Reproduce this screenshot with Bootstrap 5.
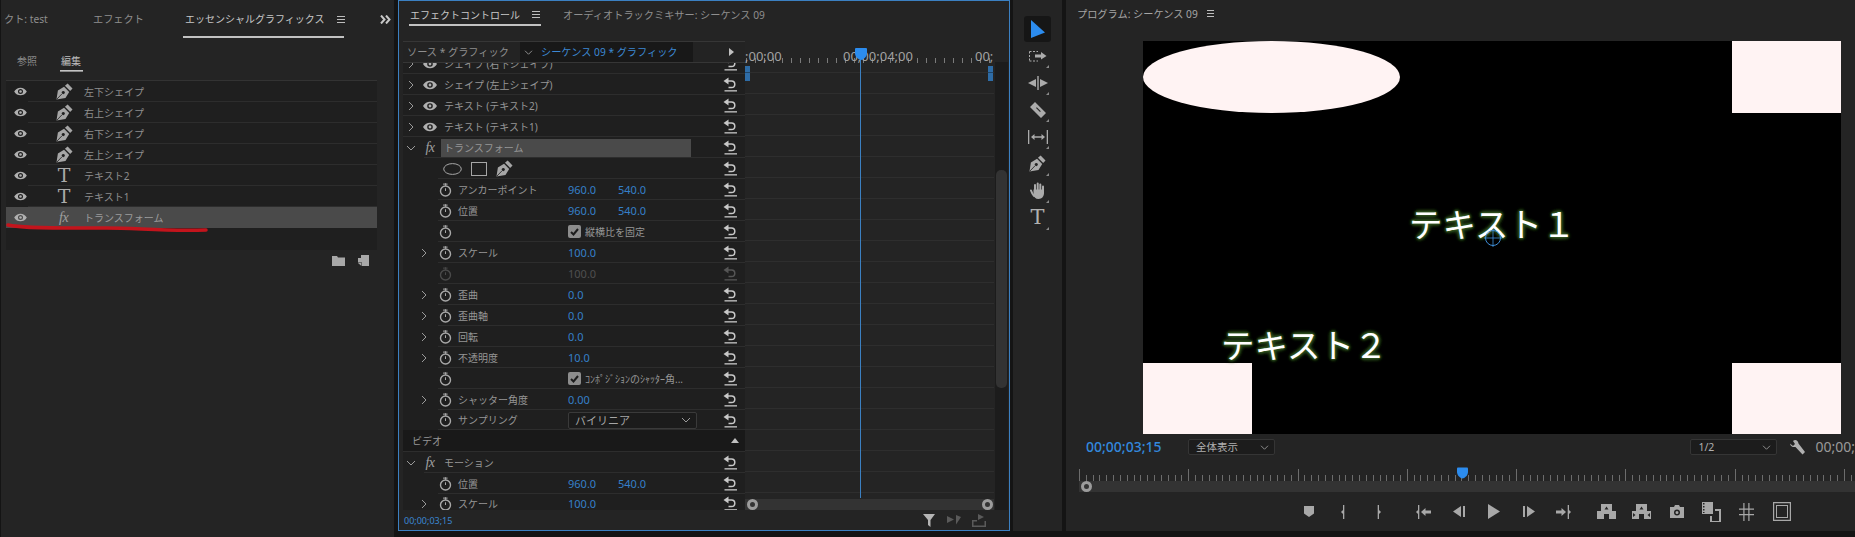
<!DOCTYPE html>
<html lang="ja">
<head>
<meta charset="utf-8">
<title>エフェクトコントロール</title>
<link href="https://cdn.jsdelivr.net/npm/bootstrap@5.3.0/dist/css/bootstrap.min.css" rel="stylesheet">
<style>
html,body{height:537px;overflow:hidden;}
body{margin:0;background:#141414;color:#9c9c9c;font-family:"Noto Sans","Noto Sans CJK JP",sans-serif;font-size:10px;line-height:1;}
.appshell{width:1855px;height:537px;}
.ic{display:block;fill:currentColor;flex:none;}
.sr{fill:none;stroke:currentColor;}
/* left */
.pane-left{width:393px;height:537px;margin-left:1px;background:#242424;flex:none;}
.tabstrip{height:41px;position:relative;}
.ptab{color:#8f8f8f;font-size:10.2px;white-space:nowrap;}
.ptab-on{color:#c8c8c8;font-size:10px;}
.tabbar{position:absolute;height:2px;background:#c2c2c2;}
.burger{width:8px;height:7px;border-top:1px solid #bdbdbd;border-bottom:1px solid #bdbdbd;position:relative;flex:none;}
.burger::after{content:"";position:absolute;left:0;right:0;top:2px;height:1px;background:#bdbdbd;}
.lefttabs{padding:14px 0 0 3px;}
.sub-tabs{height:39px;padding:15px 0 0 16px;position:relative;}
.sub-tab{font-size:10px;color:#8a8a8a;width:44px;}
.sub-tab-on{color:#bdbdbd;}
.layerlist{margin-left:5px;width:371px;height:170px;background:#1f1f1f;border-top:1px solid #333;position:relative;border-radius:0;}
.layer{height:21px;padding:0;border:0;border-radius:0!important;color:#8e8e8e;background:linear-gradient(#2d2d2d,#2d2d2d) 22px 100%/100% 1px no-repeat;font-size:10px;}
.layer-on{background:#4a4a4a;}
.lay-eye{width:28px;padding-left:8px;color:#b0b0b0;flex:none;}
.lay-icon{width:50px;padding-left:22px;color:#a6a6a6;flex:none;display:flex;justify-content:flex-start;}
.serif-t{font-family:"DejaVu Serif",serif;font-size:19px;line-height:21px;color:#aaa;display:block;width:18px;text-align:center;margin-left:-1px;}
.fx-mark{font-family:"Liberation Serif",serif;font-style:italic;font-size:14px;color:#a0a0a0;line-height:21px;letter-spacing:-.5px;}
.redline{position:absolute;left:0;top:140px;pointer-events:none;}
.leftfoot{width:376px;margin-top:5px;padding-right:8px;color:#a8a8a8;gap:13px;}
/* effect controls */
.pane-fx{width:612px;height:531px;margin-left:4px;background:#242424;border:1px solid #3b80c2;flex:none;}
.fxtabs{height:40px;position:relative;padding:8px 0 0 11px;}
.fxbody{height:470px;}
.fxleft{width:342px;margin-left:4px;flex:none;height:469px;overflow:hidden;background:#1f1f1f;}
.srcbar{height:22px;background:#232323;border-top:1px solid #363636;border-bottom:1px solid #363636;position:relative;z-index:2;flex:none;font-size:10.2px;}
.srcname{width:117px;padding-left:4px;color:#8e8e8e;white-space:nowrap;flex:none;}
.srcsel{width:173px;height:20px;background:#181818;color:#3c88d4;white-space:nowrap;padding-left:4px;flex:none;gap:8px;}
.srcarrow{width:0;height:0;border-left:5px solid #c0c0c0;border-top:4px solid transparent;border-bottom:4px solid transparent;margin-left:36px;}
.fxrows{margin-top:-10px;}
.erow{height:21px;flex:none;color:#969696;background:linear-gradient(#2d2d2d,#2d2d2d) 35px 100%/100% 1px no-repeat;white-space:nowrap;}
.erow-top{background:linear-gradient(#2d2d2d,#2d2d2d) 0 100%/100% 1px no-repeat;}
.erow-mid{background:linear-gradient(#2d2d2d,#2d2d2d) 21px 100%/100% 1px no-repeat;}
.erow-video{background:#191919;border-bottom:1px solid #2d2d2d;padding-left:9px;height:22px;}
.erow-last{height:19px;background:none;}
.tw{width:16px;flex:none;display:flex;justify-content:center;color:#9a9a9a;}
.t-eye{width:22px;flex:none;display:flex;justify-content:center;color:#b0b0b0;}
.t-fx{width:22px;flex:none;text-align:center;margin-right:3px;}
.t-fx .fx-mark{line-height:19px;}
.tname{padding-left:3px;}
.tw2{width:35px;padding-left:17px;flex:none;color:#9a9a9a;}
.swatch{width:14px;flex:none;display:flex;justify-content:center;color:#a9a9a9;}
.elabel{width:110px;margin-left:6px;flex:none;}
.eval{width:50px;flex:none;color:#357fc9;font-size:11px;}
.eval-off{color:#4f4f4f;}
.swatch-off{color:#4a4a4a;}
.reset{margin-left:auto;margin-right:7px;color:#c8c8c8;flex:none;}
.reset-off{color:#555;}
.xhl{height:18px;width:250px;margin-left:-3px;background:#4a4a4a;padding-left:3px;flex:none;display:flex;align-items:center;}
.shapes{padding-left:40px;gap:9px;color:#a6a6a6;}
.tick{width:13px;height:13px;background:#8d8d8d;border-radius:2px;color:#1d1d1d;flex:none;display:flex;align-items:center;justify-content:center;margin-right:4px;}
.checkcell{font-size:10px;}
.dropper{width:129px;height:17px;background:#1b1b1b;border:1px solid #3a3a3a;border-radius:2px;padding:0 5px 0 6px;color:#a6a6a6;font-size:11px;flex:none;}
.tline{width:249px;flex:none;position:relative;height:469px;}
.ruler{height:22px;position:relative;color:#a2a2a2;font-size:13px;padding-top:9px;background:repeating-linear-gradient(to right,#7a7a7a 0 1px,transparent 1px 9px) 1px 100%/100% 5px no-repeat;}
.rulab1{width:98px;display:inline-block;}
.rulab2{width:132px;display:inline-block;}
.tgrid{height:436px;background:linear-gradient(to bottom,transparent 20px,#2e2e2e 20px) 0 -11px/100% 21px;}
.tscroll{height:11px;background:#333;position:relative;}
.knob{position:absolute;width:11px;height:11px;border:3px solid #9c9c9c;border-radius:50%;background:#333;top:0;}
.phead-line{position:absolute;left:115px;top:16px;width:1px;height:441px;background:#3b80c2;}
.phead{position:absolute;left:110px;top:7px;color:#2c8cee;}
.kf{position:absolute;width:5px;height:15px;top:25px;background:linear-gradient(#2e6ca6 0 6px,#1f4468 6px 7px,#2e6ca6 7px);}
.vtrack{width:13px;margin-left:1px;flex:none;margin-top:21px;height:448px;background:#1c1c1c;padding:108px 1px 0 1px;}
.vthumb{height:218px;background:#333;border-radius:5px;}
.fxfoot{height:18px;padding-left:5px;color:#3b86d1;font-size:9px;position:relative;}
.foot-ic{position:absolute;top:3px;}
/* tools */
.pane-tools{width:49px;height:531px;margin-left:3px;background:#242424;flex:none;padding-top:16px;color:#ababab;}
.toolslot{height:27px;width:100%;display:flex;align-items:center;justify-content:center;position:relative;}
.toolslot:not(.tool-sel)::after{content:"";position:absolute;right:13px;bottom:1px;border-bottom:3px solid #8a8a8a;border-left:3px solid transparent;}
.tool-sel{height:26px;width:27px;margin-left:11px;background:#161616;border-radius:3px;color:#2c8cee;}
.tool-t{font-family:"DejaVu Serif",serif;font-size:21px;color:#b0b0b0;line-height:27px;}
/* program */
.pane-prog{width:789px;height:531px;margin-left:4px;background:#242424;flex:none;overflow:hidden;}
.progtabs{height:41px;padding:8px 0 0 11px;gap:9px;}
.viewer{width:698px;height:393px;margin-left:77px;background:#000;position:relative;overflow:hidden;flex:none;}
.vshape{position:absolute;background:#fff3f3;}
.vtext{position:absolute;color:#fff;font-size:33.5px;line-height:35px;white-space:nowrap;text-shadow:0 0 2px #30521f,0 0 2px #30521f,0 0 3px #30521f,0 0 3px #30521f,0 0 4px #2c4a1e,0 0 4px #2c4a1e,0 0 5px #2c4a1e,0 0 5px #2c4a1e;}
.ctrlrow{height:16px;margin-top:5px;padding-left:20px;flex:none;}
.tcode{width:102px;color:#3388dd;font-size:14px;font-weight:500;flex:none;}
.mselect{width:87px;height:16px;background:#1c1c1c;border:1px solid #353535;border-radius:2px;padding:0 5px 0 7px;color:#b0b0b0;font-size:10.5px;flex:none;}
.wrench{margin-left:13px;color:#b0b0b0;}
.tcode-r{margin-left:10px;color:#9a9a9a;font-size:14px;white-space:nowrap;}
.mruler{height:12px;margin:14px 0 0 13px;position:relative;flex:none;background:
 repeating-linear-gradient(to right,#6c6c6c 0 1px,transparent 1px 109.3px) 0 0/100% 100% no-repeat,
 repeating-linear-gradient(to right,#6c6c6c 0 1px,transparent 1px 6.83px) 0 100%/100% 6px no-repeat;}
.mhead{position:absolute;left:378px;top:-2px;color:#2c8cee;}
.mbar{height:11px;margin-left:13px;background:#333;position:relative;flex:none;}
.transport{padding-left:225px;height:39px;color:#a8a8a8;flex:none;}
.tbtn{width:35px;flex:none;display:flex;justify-content:center;}
.tgap1{margin-left:10px;}
.tgap2{margin-left:8px;}
</style>
</head>
<body>
<svg width="0" height="0" class="position-absolute">
 <defs>
  <symbol id="i-eye" viewBox="0 0 14 10"><path fill-rule="evenodd" d="M0 5C3-.7 11-.7 14 5 11 10.700 3 10.700 0 5ZM7 2.200A2.800 2.800 0 1 0 7 7.800 2.800 2.800 0 1 0 7 2.200Z"/><circle cx="7" cy="5" r="1.400"/></symbol>
  <symbol id="i-pen" viewBox="0 0 18 18"><path fill-rule="evenodd" d="M.5 17.500 2 8 8.500 4 14 9.500 10 16ZM7.700 8.400A1.700 1.700 0 1 0 7.701 8.400Z"/><path d="M9.500 3 12.300 .5 17.500 5.700 15 8.500Z"/><path d="M1 17 6.300 11.500" stroke="#242424" stroke-width=".9"/></symbol>
  <symbol id="i-reset" viewBox="0 0 15 15"><path d="M.5 4 5.500 .5V7.500Z"/><path fill="none" stroke="currentColor" stroke-width="1.500" d="M5 4H8.500A3.300 3.300 0 0 1 8.500 10.600H5.500"/><path d="M1.500 13.200H14V14.500H1.500Z"/></symbol>
  <symbol id="i-watch" viewBox="0 0 13 14"><circle cx="6.500" cy="8" r="5" fill="none" stroke="currentColor" stroke-width="1.400"/><path d="M5.800 0 6.300 3H7.200L7.100 .5ZM6 5.200 7 5.200 7 8H6Z"/><path d="M4 .6H8.600V1.600H4Z"/></symbol>
  <symbol id="i-chev-r" viewBox="0 0 8 10"><path d="M2 1 6 5 2 9" fill="none" stroke="currentColor" stroke-width="1"/></symbol>
  <symbol id="i-chev-d" viewBox="0 0 10 8"><path d="M1 2 5 6 9 2" fill="none" stroke="currentColor" stroke-width="1"/></symbol>
  <symbol id="i-head" viewBox="0 0 12 12"><path d="M0 1Q0 0 1 0H11Q12 0 12 1V5C12 9 8 12 6 12 4 12 0 9 0 5Z"/></symbol>
 </defs>
</svg>

<div class="appshell d-flex">
 <!-- left: essential graphics -->
 <section class="pane-left">
  <div class="tabstrip">
   <div class="nav lefttabs align-items-center flex-nowrap">
    <span class="ptab" style="width:89px">クト: test</span>
    <span class="ptab" style="width:92px">エフェクト</span>
    <span class="ptab ptab-on" style="width:152px">エッセンシャルグラフィックス</span>
    <span class="burger"></span>
   </div>
   <span class="tabbar" style="left:182px;width:161px;top:36px"></span>
   <svg class="ic position-absolute" style="left:379px;top:15px;color:#c8c8c8" width="11" height="9" viewBox="0 0 11 9"><path d="M1 .5 4.500 4.500 1 8.500M6 .5 9.500 4.500 6 8.500" fill="none" stroke="currentColor" stroke-width="2"/></svg>
  </div>
  <div class="sub-tabs nav">
   <span class="sub-tab">参照</span><span class="sub-tab sub-tab-on">編集</span>
   <span class="tabbar" style="left:59px;width:23px;top:29px;height:1px;box-shadow:0 1px 0 #8a8a8a"></span>
  </div>
  <div class="list-group layerlist">
   <div class="list-group-item layer d-flex align-items-center"><span class="lay-eye"><svg class="ic" width="13" height="9"><use href="#i-eye"/></svg></span><span class="lay-icon"><svg class="ic" width="17" height="17"><use href="#i-pen"/></svg></span>左下シェイプ</div>
   <div class="list-group-item layer d-flex align-items-center"><span class="lay-eye"><svg class="ic" width="13" height="9"><use href="#i-eye"/></svg></span><span class="lay-icon"><svg class="ic" width="17" height="17"><use href="#i-pen"/></svg></span>右上シェイプ</div>
   <div class="list-group-item layer d-flex align-items-center"><span class="lay-eye"><svg class="ic" width="13" height="9"><use href="#i-eye"/></svg></span><span class="lay-icon"><svg class="ic" width="17" height="17"><use href="#i-pen"/></svg></span>右下シェイプ</div>
   <div class="list-group-item layer d-flex align-items-center"><span class="lay-eye"><svg class="ic" width="13" height="9"><use href="#i-eye"/></svg></span><span class="lay-icon"><svg class="ic" width="17" height="17"><use href="#i-pen"/></svg></span>左上シェイプ</div>
   <div class="list-group-item layer d-flex align-items-center"><span class="lay-eye"><svg class="ic" width="13" height="9"><use href="#i-eye"/></svg></span><span class="lay-icon"><span class="serif-t">T</span></span>テキスト2</div>
   <div class="list-group-item layer d-flex align-items-center"><span class="lay-eye"><svg class="ic" width="13" height="9"><use href="#i-eye"/></svg></span><span class="lay-icon"><span class="serif-t">T</span></span>テキスト1</div>
   <div class="list-group-item layer layer-on d-flex align-items-center"><span class="lay-eye"><svg class="ic" width="13" height="9"><use href="#i-eye"/></svg></span><span class="lay-icon"><span class="fx-mark" style="margin-left:3px">fx</span></span><span style="color:#9c9c9c">トランスフォーム</span></div>
   <svg class="redline" width="210" height="14" viewBox="0 0 210 14"><path d="M2 4C20 8 60 7 100 7 130 7 160 10.500 200 9" fill="none" stroke="#c3141c" stroke-width="3.500" stroke-linecap="round"/></svg>
  </div>
  <div class="leftfoot d-flex justify-content-end align-items-center">
   <svg class="ic" width="13" height="10" viewBox="0 0 13 10"><path d="M0 0H5L6 1.500H13V10H0Z"/></svg>
   <svg class="ic" width="11" height="11" viewBox="0 0 11 11"><path d="M3 0H11V11H4V7.500H0V3H3Z"/><path d="M0 8H3.500V11Z"/></svg>
  </div>
 </section>

 <!-- effect controls -->
 <section class="pane-fx d-flex flex-column">
  <div class="fxtabs nav flex-nowrap align-items-start">
   <span class="ptab ptab-on" style="width:122px;padding-top:1px">エフェクトコントロール</span>
   <span class="burger" style="margin-top:2px"></span>
   <span class="ptab" style="margin-left:23px;padding-top:1px">オーディオトラックミキサー: シーケンス 09</span>
   <span class="tabbar" style="left:10px;width:132px;top:23px"></span>
  </div>
  <div class="fxbody d-flex">
   <div class="fxleft d-flex flex-column">
    <div class="srcbar d-flex align-items-center">
     <span class="srcname">ソース * グラフィック</span>
     <span class="srcsel d-flex align-items-center"><svg class="ic" width="9" height="7" style="color:#9a9a9a"><use href="#i-chev-d"/></svg>シーケンス 09 * グラフィック</span>
     <span class="srcarrow"></span>
    </div>
    <div class="fxrows d-flex flex-column">
     <div class="erow erow-top d-flex align-items-center"><span class="tw"><svg class="ic" width="8" height="10"><use href="#i-chev-r"/></svg></span><span class="t-eye"><svg class="ic" width="14" height="10"><use href="#i-eye"/></svg></span><span class="tname">シェイプ (右下シェイプ)</span><svg class="ic reset" width="15" height="15"><use href="#i-reset"/></svg></div>
     <div class="erow erow-top d-flex align-items-center"><span class="tw"><svg class="ic" width="8" height="10"><use href="#i-chev-r"/></svg></span><span class="t-eye"><svg class="ic" width="14" height="10"><use href="#i-eye"/></svg></span><span class="tname">シェイプ (左上シェイプ)</span><svg class="ic reset" width="15" height="15"><use href="#i-reset"/></svg></div>
     <div class="erow erow-top d-flex align-items-center"><span class="tw"><svg class="ic" width="8" height="10"><use href="#i-chev-r"/></svg></span><span class="t-eye"><svg class="ic" width="14" height="10"><use href="#i-eye"/></svg></span><span class="tname">テキスト (テキスト2)</span><svg class="ic reset" width="15" height="15"><use href="#i-reset"/></svg></div>
     <div class="erow erow-top d-flex align-items-center"><span class="tw"><svg class="ic" width="8" height="10"><use href="#i-chev-r"/></svg></span><span class="t-eye"><svg class="ic" width="14" height="10"><use href="#i-eye"/></svg></span><span class="tname">テキスト (テキスト1)</span><svg class="ic reset" width="15" height="15"><use href="#i-reset"/></svg></div>
     <div class="erow erow-mid d-flex align-items-center"><span class="tw"><svg class="ic" width="10" height="8"><use href="#i-chev-d"/></svg></span><span class="t-fx"><span class="fx-mark">fx</span></span><span class="xhl">トランスフォーム</span><svg class="ic reset" width="15" height="15"><use href="#i-reset"/></svg></div>
     <div class="erow d-flex align-items-center"><span class="shapes d-flex align-items-center"><svg class="ic sr" width="19" height="12" viewBox="0 0 19 12"><ellipse cx="9.500" cy="6" rx="8.800" ry="5.400" fill="none" stroke="currentColor"/></svg><svg class="ic sr" width="16" height="14" viewBox="0 0 16 14"><rect x=".5" y=".5" width="15" height="13" fill="none" stroke="currentColor"/></svg><svg class="ic" width="17" height="17"><use href="#i-pen"/></svg></span><svg class="ic reset" width="15" height="15"><use href="#i-reset"/></svg></div>
     <div class="erow d-flex align-items-center"><span class="tw2"></span><span class="swatch"><svg class="ic" width="13" height="14"><use href="#i-watch"/></svg></span><span class="elabel">アンカーポイント</span><span class="eval">960.0</span><span class="eval">540.0</span><svg class="ic reset" width="15" height="15"><use href="#i-reset"/></svg></div>
     <div class="erow d-flex align-items-center"><span class="tw2"></span><span class="swatch"><svg class="ic" width="13" height="14"><use href="#i-watch"/></svg></span><span class="elabel">位置</span><span class="eval">960.0</span><span class="eval">540.0</span><svg class="ic reset" width="15" height="15"><use href="#i-reset"/></svg></div>
     <div class="erow d-flex align-items-center"><span class="tw2"></span><span class="swatch"><svg class="ic" width="13" height="14"><use href="#i-watch"/></svg></span><span class="elabel"></span><span class="tick"><svg class="ic" width="9" height="8" viewBox="0 0 9 8"><path d="M1 4 3.500 6.500 8 1" fill="none" stroke="currentColor" stroke-width="2"/></svg></span><span class="checkcell">縦横比を固定</span><svg class="ic reset" width="15" height="15"><use href="#i-reset"/></svg></div>
     <div class="erow d-flex align-items-center"><span class="tw2"><svg class="ic" width="8" height="10"><use href="#i-chev-r"/></svg></span><span class="swatch"><svg class="ic" width="13" height="14"><use href="#i-watch"/></svg></span><span class="elabel">スケール</span><span class="eval">100.0</span><svg class="ic reset" width="15" height="15"><use href="#i-reset"/></svg></div>
     <div class="erow d-flex align-items-center"><span class="tw2 swatch-off"></span><span class="swatch swatch-off"><svg class="ic" width="13" height="14"><use href="#i-watch"/></svg></span><span class="elabel"></span><span class="eval eval-off">100.0</span><svg class="ic reset reset-off" width="15" height="15"><use href="#i-reset"/></svg></div>
     <div class="erow d-flex align-items-center"><span class="tw2"><svg class="ic" width="8" height="10"><use href="#i-chev-r"/></svg></span><span class="swatch"><svg class="ic" width="13" height="14"><use href="#i-watch"/></svg></span><span class="elabel">歪曲</span><span class="eval">0.0</span><svg class="ic reset" width="15" height="15"><use href="#i-reset"/></svg></div>
     <div class="erow d-flex align-items-center"><span class="tw2"><svg class="ic" width="8" height="10"><use href="#i-chev-r"/></svg></span><span class="swatch"><svg class="ic" width="13" height="14"><use href="#i-watch"/></svg></span><span class="elabel">歪曲軸</span><span class="eval">0.0</span><svg class="ic reset" width="15" height="15"><use href="#i-reset"/></svg></div>
     <div class="erow d-flex align-items-center"><span class="tw2"><svg class="ic" width="8" height="10"><use href="#i-chev-r"/></svg></span><span class="swatch"><svg class="ic" width="13" height="14"><use href="#i-watch"/></svg></span><span class="elabel">回転</span><span class="eval">0.0</span><svg class="ic reset" width="15" height="15"><use href="#i-reset"/></svg></div>
     <div class="erow d-flex align-items-center"><span class="tw2"><svg class="ic" width="8" height="10"><use href="#i-chev-r"/></svg></span><span class="swatch"><svg class="ic" width="13" height="14"><use href="#i-watch"/></svg></span><span class="elabel">不透明度</span><span class="eval">10.0</span><svg class="ic reset" width="15" height="15"><use href="#i-reset"/></svg></div>
     <div class="erow d-flex align-items-center"><span class="tw2"></span><span class="swatch"><svg class="ic" width="13" height="14"><use href="#i-watch"/></svg></span><span class="elabel"></span><span class="tick"><svg class="ic" width="9" height="8" viewBox="0 0 9 8"><path d="M1 4 3.500 6.500 8 1" fill="none" stroke="currentColor" stroke-width="2"/></svg></span><span class="checkcell">ｺﾝﾎﾟｼﾞｼｮﾝのｼｬｯﾀｰ角...</span><svg class="ic reset" width="15" height="15"><use href="#i-reset"/></svg></div>
     <div class="erow d-flex align-items-center"><span class="tw2"><svg class="ic" width="8" height="10"><use href="#i-chev-r"/></svg></span><span class="swatch"><svg class="ic" width="13" height="14"><use href="#i-watch"/></svg></span><span class="elabel">シャッター角度</span><span class="eval">0.00</span><svg class="ic reset" width="15" height="15"><use href="#i-reset"/></svg></div>
     <div class="erow d-flex align-items-center" style="height:20px"><span class="tw2"></span><span class="swatch"><svg class="ic" width="13" height="14"><use href="#i-watch"/></svg></span><span class="elabel">サンプリング</span><span class="dropper d-flex align-items-center justify-content-between">バイリニア<svg class="ic" width="10" height="8" style="color:#9a9a9a"><use href="#i-chev-d"/></svg></span><svg class="ic reset" width="15" height="15"><use href="#i-reset"/></svg></div>
     <div class="erow erow-video d-flex align-items-center">ビデオ<span class="ms-auto" style="margin-right:6px;border-bottom:5px solid #c0c0c0;border-left:4px solid transparent;border-right:4px solid transparent"></span></div>
     <div class="erow erow-mid d-flex align-items-center"><span class="tw"><svg class="ic" width="10" height="8"><use href="#i-chev-d"/></svg></span><span class="t-fx"><span class="fx-mark">fx</span></span><span class="tname" style="padding-left:0">モーション</span><svg class="ic reset" width="15" height="15"><use href="#i-reset"/></svg></div>
     <div class="erow d-flex align-items-center"><span class="tw2"></span><span class="swatch"><svg class="ic" width="13" height="14"><use href="#i-watch"/></svg></span><span class="elabel">位置</span><span class="eval">960.0</span><span class="eval">540.0</span><svg class="ic reset" width="15" height="15"><use href="#i-reset"/></svg></div>
     <div class="erow erow-last d-flex align-items-center"><span class="tw2"><svg class="ic" width="8" height="10"><use href="#i-chev-r"/></svg></span><span class="swatch"><svg class="ic" width="13" height="14"><use href="#i-watch"/></svg></span><span class="elabel">スケール</span><span class="eval">100.0</span><svg class="ic reset" width="15" height="15"><use href="#i-reset"/></svg></div>
    </div>
   </div>
   <div class="tline">
    <div class="ruler"><span class="rulab1">;00;00</span><span class="rulab2">00;00;04;00</span><span>00;</span></div>
    <div class="tgrid"></div>
    <div class="tscroll"><span class="knob" style="left:2px"></span><span class="knob" style="left:237px"></span></div>
    <span class="kf" style="left:0"></span><span class="kf" style="left:243px"></span>
    <span class="phead-line"></span>
    <svg class="ic phead" width="12" height="12"><use href="#i-head"/></svg>
   </div>
   <div class="vtrack"><div class="vthumb"></div></div>
  </div>
  <div class="fxfoot d-flex align-items-center">00;00;03;15
   <svg class="ic foot-ic" style="left:524px;color:#b4b4b4" width="13" height="13" viewBox="0 0 13 13"><path d="M0 0H12L7.500 6V13L5 11V6Z"/></svg>
   <svg class="ic foot-ic" style="left:548px;color:#5a5a5a" width="15" height="13" viewBox="0 0 15 13"><path d="M0 2 7 5.500 0 9ZM9 10.500V1L14 3" fill="currentColor"/></svg>
   <svg class="ic foot-ic" style="left:573px;color:#5a5a5a" width="14" height="13" viewBox="0 0 14 13"><path d="M0 6H5V7.500H1.500V11.500H12.500V7H14V13H0Z"/><path d="M6 0 12 3 6 6Z"/></svg>
  </div>
 </section>

 <!-- tools -->
 <section class="pane-tools d-flex flex-column">
  <div class="toolslot tool-sel"><svg class="ic" width="14" height="18" viewBox="0 0 14 18"><path d="M0 0 14 12.500 0 18Z"/></svg></div>
  <div class="toolslot"><svg class="ic" width="18" height="12" viewBox="0 0 18 12"><path d="M.5 1.500H9M.5 1.500V11M.5 11H9" fill="none" stroke="currentColor" stroke-dasharray="2 1.500"/><path d="M6 4.500H12V2L17.500 6 12 9.500V7.500H6Z"/></svg></div>
  <div class="toolslot"><svg class="ic" width="20" height="14" viewBox="0 0 20 14"><path d="M9.300 0H10.700V14H9.300ZM8 3V11L0 7ZM12 3V11L20 7Z"/></svg></div>
  <div class="toolslot"><svg class="ic" width="16" height="16" viewBox="0 0 16 16"><path fill-rule="evenodd" d="M5 0 16 11 11 16 0 5ZM6 6 10 10 10.800 9.200 6.800 5.200Z"/></svg></div>
  <div class="toolslot"><svg class="ic" width="20" height="14" viewBox="0 0 20 14"><path d="M0 0H1.300V14H0ZM18.700 0H20V14H18.700ZM3 7 6.500 4V6.300H13.500V4L17 7 13.500 10V7.700H6.500V10Z"/></svg></div>
  <div class="toolslot"><svg class="ic" width="17" height="17"><use href="#i-pen"/></svg></div>
  <div class="toolslot"><svg class="ic" width="16" height="17" viewBox="0 0 16 17"><path d="M4 14C2.500 12 1.500 10 1 8.500" stroke="currentColor" stroke-width="2" stroke-linecap="round" fill="none"/><path d="M5 8V3M7.700 8V1.500M10.300 8V2.500M13 9V4.500" stroke="currentColor" stroke-width="2" stroke-linecap="round" fill="none"/><path d="M3.500 7.500H14V11C14 14 12 17 8.500 17 5.500 17 4 15 3.500 13Z"/></svg></div>
  <div class="toolslot"><span class="tool-t">T</span></div>
 </section>

 <!-- program monitor -->
 <section class="pane-prog d-flex flex-column">
  <div class="progtabs d-flex align-items-start"><span class="ptab" style="color:#a6a6a6;padding-top:1px">プログラム: シーケンス 09</span><span class="burger" style="margin-top:2px;width:7px"></span></div>
  <div class="viewer">
   <svg class="position-absolute" style="left:0;top:0" width="258" height="72" viewBox="0 0 258 72"><ellipse cx="128.500" cy="36" rx="128.500" ry="36" fill="#fff3f3"/></svg>
   <span class="vshape" style="left:589px;top:0;width:109px;height:72px"></span>
   <span class="vshape" style="left:0;top:322px;width:109px;height:71px"></span>
   <span class="vshape" style="left:589px;top:322px;width:109px;height:71px"></span>
   <span class="vtext" style="left:266px;top:166px">テキスト１</span>
   <span class="vtext" style="left:78px;top:287px">テキスト２</span>
   <svg class="position-absolute" style="left:341px;top:188px;color:#3f8fd8" width="18" height="18" viewBox="0 0 18 18"><circle cx="9" cy="9" r="7.500" fill="none" stroke="currentColor"/><path d="M9 0V18M0 9H18" stroke="currentColor" stroke-width=".8"/></svg>
  </div>
  <div class="ctrlrow d-flex align-items-center">
   <span class="tcode">00;00;03;15</span>
   <span class="mselect d-flex align-items-center justify-content-between">全体表示<svg class="ic" width="9" height="7" style="color:#9a9a9a"><use href="#i-chev-d"/></svg></span>
   <span class="mselect d-flex align-items-center justify-content-between ms-auto">1/2<svg class="ic" width="9" height="7" style="color:#9a9a9a"><use href="#i-chev-d"/></svg></span>
   <svg class="ic wrench" width="15" height="16" viewBox="0 0 15 15"><path d="M0 4 3 6.500 5 4.500 3 1.500C5-.5 8 .5 8.500 4L15 12.500 12.500 15 5.500 7.500C3 8 .5 7 0 4Z"/></svg>
   <span class="tcode-r">00;00;</span>
  </div>
  <div class="mruler">
   <svg class="ic mhead" width="11" height="12"><use href="#i-head"/></svg>
  </div>
  <div class="mbar"><span class="knob" style="left:2px"></span></div>
  <div class="transport d-flex align-items-center">
   <span class="tbtn"><svg class="ic" width="10" height="11" viewBox="0 0 10 11"><path d="M0 0H10V7.500L5 11 0 7.500Z"/></svg></span>
   <span class="tbtn"><svg class="ic" width="5" height="14" viewBox="0 0 5 14"><path d="M2 0H3.300V14H2ZM0 7 2 5V9Z"/></svg></span>
   <span class="tbtn"><svg class="ic" width="5" height="14" viewBox="0 0 5 14"><path d="M1.700 0H3V14H1.700ZM5 7 3 5V9Z"/></svg></span>
   <span class="tbtn tgap1"><svg class="ic" width="15" height="14" viewBox="0 0 15 14"><path d="M2 0H3.300V14H2ZM0 7 2 5V9ZM5 7 9.500 3V5.500H15V8.500H9.500V11Z"/></svg></span>
   <span class="tbtn"><svg class="ic" width="12" height="11" viewBox="0 0 12 11"><path d="M0 5.500 8 0V11ZM10 0H12V11H10Z"/></svg></span>
   <span class="tbtn"><svg class="ic" width="12" height="15" viewBox="0 0 12 15"><path d="M0 0 12 7.500 0 15Z"/></svg></span>
   <span class="tbtn"><svg class="ic" width="12" height="11" viewBox="0 0 12 11"><path d="M12 5.500 4 0V11ZM0 0H2V11H0Z"/></svg></span>
   <span class="tbtn"><svg class="ic" width="15" height="14" viewBox="0 0 15 14"><path d="M11.700 0H13V14H11.700ZM15 7 13 5V9ZM10 7 5.500 3V5.500H0V8.500H5.500V11Z"/></svg></span>
   <span class="tbtn tgap2"><svg class="ic" width="19" height="15" viewBox="0 0 19 15"><path fill-rule="evenodd" d="M4 0H15V7H19V15H12V10H7V15H0V7H4ZM9.500 2.500 7.500 5.500H11.500Z"/></svg></span>
   <span class="tbtn"><svg class="ic" width="19" height="15" viewBox="0 0 19 15"><path fill-rule="evenodd" d="M4 0H15V7H19V15H12V10H7V15H0V7H4ZM9.500 2.500 7.500 5.500H11.500ZM1 9V13L3.500 11ZM18 9V13L15.500 11Z"/></svg></span>
   <span class="tbtn"><svg class="ic" width="14" height="13" viewBox="0 0 14 13"><path fill-rule="evenodd" d="M0 2H4L5 0H9L10 2H14V13H0ZM7 4.500A3 3 0 1 0 7 10.500 3 3 0 1 0 7 4.500ZM7 6A1.500 1.500 0 1 1 7 9 1.500 1.500 0 1 1 7 6Z"/></svg></span>
   <span class="tbtn"><svg class="ic" width="19" height="20" viewBox="0 0 19 20"><path fill-rule="evenodd" d="M0 0H11V12H0ZM1 1V2.500H2.500V1ZM1 4V5.500H2.500V4ZM1 7V8.500H2.500V7ZM1 10V11H2.500V10Z"/><path d="M8 14H10V19H17V9H13V7H19V20H8Z"/></svg></span>
   <span class="tbtn"><svg class="ic" width="15" height="18" viewBox="0 0 15 18"><path d="M4.300 0H5.500V18H4.300ZM9.300 0H10.500V18H9.300ZM0 5.500H15V6.700H0ZM0 11H15V12.200H0Z"/></svg></span>
   <span class="tbtn"><svg class="ic" width="18" height="19" viewBox="0 0 18 19"><path fill-rule="evenodd" d="M0 0H18V19H0ZM1.200 1.200V17.800H16.800V1.200ZM3 3H15V16H3ZM4 4V15H14V4Z"/></svg></span>
  </div>
 </section>
</div>
<script src="https://cdn.jsdelivr.net/npm/bootstrap@5.3.0/dist/js/bootstrap.bundle.min.js"></script>
</body>
</html>
